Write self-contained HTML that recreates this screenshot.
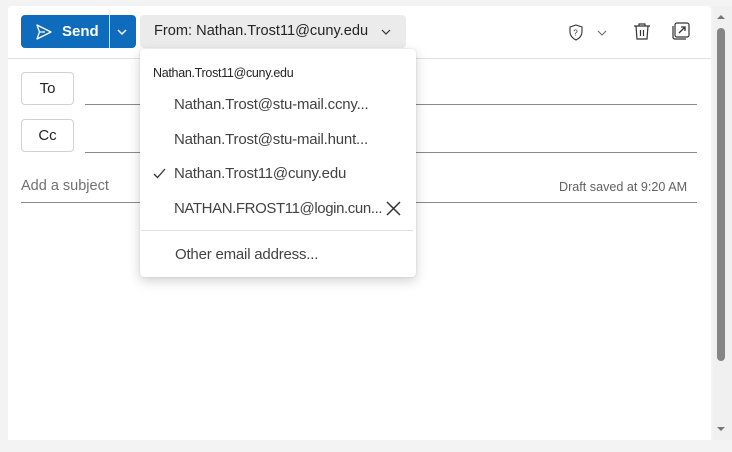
<!DOCTYPE html>
<html><head><style>
body{margin:0;width:732px;height:452px;background:#f3f3f3;font-family:"Liberation Sans",sans-serif;position:relative;overflow:hidden;color:#242424}
.a{position:absolute}
.card{left:8px;top:6px;width:703px;height:434px;background:#fff;border-radius:4px 4px 0 0}
.send{left:21px;top:15px;width:115px;height:33px;background:#0f6cbd;border-radius:4px;color:#fff}
.from{left:140px;top:15px;width:266px;height:33px;background:#ebebeb;border-radius:4px;font-size:14.6px;line-height:33px}
.btn{width:51px;height:31px;border:1px solid #d1d1d1;border-radius:4px;font-size:15px;text-align:center;line-height:31px;background:#fff}
.line{height:1px;background:#8a8a8a}
.menu{left:140px;top:49px;width:276px;height:228px;background:#fff;border-radius:4px;box-shadow:0 4px 12px rgba(0,0,0,.18),0 0 2px rgba(0,0,0,.12)}
.it{left:34px;font-size:15px;color:#424242;letter-spacing:-0.2px}
</style></head><body>
<div class="a card"></div>
<div class="a" style="left:8px;top:58px;width:703px;height:1px;background:#e0e0e0"></div>
<div class="a send">
<svg class="a" style="left:14px;top:8px" width="18" height="18" viewBox="0 0 18 18"><path d="M2 2 L16 9 L2 16 L4.5 9 Z M4.5 9 H10" fill="none" stroke="#fff" stroke-width="1.3" stroke-linejoin="round"/></svg>
<div class="a" style="left:41px;top:0;line-height:33px;font-size:15px;font-weight:bold">Send</div>
<div class="a" style="left:88px;top:0;width:1px;height:33px;background:#fff;opacity:.8"></div>
<svg class="a" style="left:96px;top:13px" width="10" height="8"><path d="M1 2 L5 6 L9 2" fill="none" stroke="#fff" stroke-width="1.5"/></svg>
</div>
<div class="a from"><span style="position:absolute;left:14px">From: Nathan.Trost11@cuny.edu</span>
<svg class="a" style="left:241px;top:14px" width="10" height="7"><path d="M1 1 L5 5 L9 1" fill="none" stroke="#333" stroke-width="1.2"/></svg></div>
<svg class="a" style="left:568px;top:24px" width="16" height="17" viewBox="0 0 16 17"><path d="M8 1 L14 3 V8 C14 12 11 14.5 8 16 C5 14.5 2 12 2 8 V3 Z" fill="none" stroke="#333" stroke-width="1.1"/><text x="5.3" y="11.5" font-size="8" font-family="Liberation Sans" fill="#333">?</text></svg>
<svg class="a" style="left:597px;top:30px" width="10" height="6"><path d="M1 1 L5 5 L9 1" fill="none" stroke="#666" stroke-width="1"/></svg>
<svg class="a" style="left:633px;top:22px" width="18" height="19" viewBox="0 0 18 19"><path d="M1 4 H17 M6 4 V2 H12 V4 M3 4 L4 17 H14 L15 4 M7.5 8 V14 M10.5 8 V14" fill="none" stroke="#333" stroke-width="1.2"/></svg>
<svg class="a" style="left:672px;top:22px" width="18" height="18" viewBox="0 0 18 18"><rect x="3" y="1" width="14" height="14" rx="2" fill="none" stroke="#333" stroke-width="1.2"/><path d="M1 4 V15 Q1 17 3 17 H14" fill="none" stroke="#333" stroke-width="1.2"/><path d="M7 11 L13 5 M9 5 H13 V9" fill="none" stroke="#333" stroke-width="1.3"/></svg>
<div class="a btn" style="left:21px;top:72px">To</div>
<div class="a line" style="left:85px;top:104px;width:612px"></div>
<div class="a btn" style="left:21px;top:119px">Cc</div>
<div class="a line" style="left:85px;top:152px;width:612px"></div>
<div class="a" style="left:21px;top:178px;font-size:14.5px;color:#707070">Add a subject</div>
<div class="a" style="left:559px;top:180px;font-size:12.6px;color:#616161">Draft saved at 9:20 AM</div>
<div class="a line" style="left:21px;top:202px;width:676px"></div>
<div class="a menu">
<div class="a" style="left:13px;top:17px;font-size:12.5px;color:#242424;letter-spacing:-0.3px">Nathan.Trost11@cuny.edu</div>
<div class="a it" style="top:47px">Nathan.Trost@stu-mail.ccny...</div>
<div class="a it" style="top:82px">Nathan.Trost@stu-mail.hunt...</div>
<svg class="a" style="left:13px;top:119px" width="13" height="11"><path d="M1 6 L4.5 9.5 L12 1" fill="none" stroke="#333" stroke-width="1.3"/></svg>
<div class="a it" style="top:116px">Nathan.Trost11@cuny.edu</div>
<div class="a it" style="top:151px;letter-spacing:-0.4px">NATHAN.FROST11@login.cun...</div>
<svg class="a" style="left:246px;top:152px" width="15" height="15"><path d="M1 1 L14 14 M14 1 L1 14" stroke="#333" stroke-width="1.5"/></svg>
<div class="a" style="left:1px;top:181px;width:272px;height:1px;background:#e0e0e0"></div>
<div class="a it" style="left:35px;top:197px">Other email address...</div>
</div>
<div class="a" style="left:713px;top:6px;width:19px;height:434px;background:#f0f0f0"></div>
<div class="a" style="left:717px;top:28px;width:8px;height:333px;background:#858585;border-radius:4px"></div>
<svg class="a" style="left:717px;top:14px" width="8" height="6"><path d="M0 5 L4 1 L8 5Z" fill="#777"/></svg>
<svg class="a" style="left:717px;top:426px" width="8" height="6"><path d="M0 1 L4 5 L8 1Z" fill="#777"/></svg>
</body></html>
